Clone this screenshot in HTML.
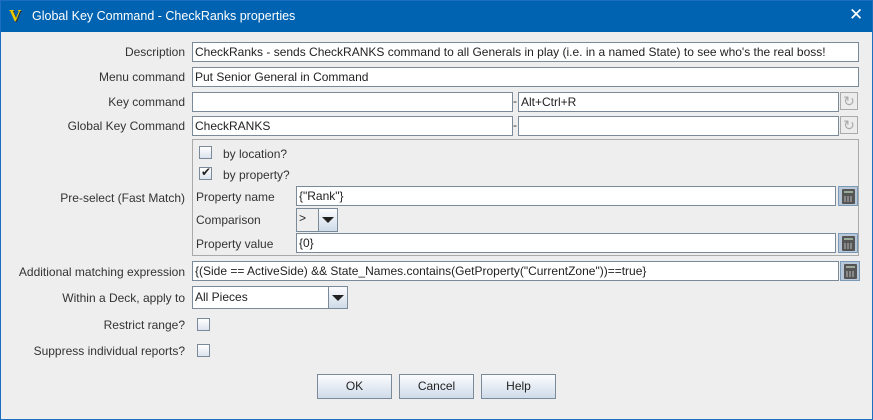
<!DOCTYPE html><html><head><style>
*{box-sizing:border-box;margin:0;padding:0}
body{width:873px;height:420px;background:#eeeeee;font:12px "Liberation Sans",sans-serif;color:#333;position:relative;overflow:hidden}
.a{position:absolute}
.win{left:0;top:0;width:873px;height:420px;border:1px solid #1c6fbf}
.title{left:0;top:0;width:873px;height:32px;background:#0063b1;color:#fff;font-size:12.5px}
.lab{position:absolute;text-align:right;width:185px;left:0;white-space:nowrap}
.f{position:absolute;background:#fff;border:1px solid #7a8a99;height:20px;padding:1px 2px;white-space:nowrap;overflow:hidden;color:#222;line-height:16px}
.cb{position:absolute;width:13px;height:13px;border:1px solid #7a8a99;background:linear-gradient(#fff,#dbe3ee)}
.btn{position:absolute;height:25px;border:1px solid #7a8a99;background:linear-gradient(#fbfcfe,#cfdbe9);text-align:center;line-height:23px;color:#222}
.calc{position:absolute;width:20px;height:20px;border:1px solid #7a9ab8;background:#b8c8d8}
.calc i{position:absolute;left:3px;top:2px;width:13px;height:15px;background:#555;border-radius:1px}
.calc b{position:absolute;left:5px;top:4px;width:9px;height:2px;background:#9a9}
.calc u{position:absolute;left:5px;top:9px;width:9px;height:6px;background:repeating-linear-gradient(90deg,#888 0 2px,#555 2px 3px)}
.rb{position:absolute;width:18px;height:18px;border:1px solid #aaa;background:#ececec;color:#aaa;font-size:14px;text-align:center;line-height:16px}
.arr{position:absolute;background:linear-gradient(#fbfcfe,#cfdbe9);border:1px solid #7a8a99}
.arr:after{content:"";position:absolute;left:50%;top:50%;margin:-3px 0 0 -6px;border-left:6px solid transparent;border-right:6px solid transparent;border-top:6px solid #222}
</style></head><body>
<div class="a title"><span class="a" style="left:9px;top:6px;font:bold 17px 'Liberation Serif',serif;color:#e8c800;text-shadow:1px 1px 0 #333">V</span><span class="a" style="left:32px;top:9px">Global Key Command - CheckRanks properties</span><span class="a" style="left:849px;top:5px;font-size:17px">✕</span></div>
<div class="a win"></div>
<div class="lab" style="top:45px">Description</div>
<div class="f" style="left:192px;top:42px;width:667px">CheckRanks - sends CheckRANKS command to all Generals in play (i.e. in a named State) to see who's the real boss!</div>
<div class="lab" style="top:70px">Menu command</div>
<div class="f" style="left:192px;top:67px;width:667px">Put Senior General in Command</div>
<div class="lab" style="top:95px">Key command</div>
<div class="f" style="left:192px;top:92px;width:321px"></div><span class="a" style="left:513px;top:94px">-</span>
<div class="f" style="left:518px;top:92px;width:321px">Alt+Ctrl+R</div><div class="rb" style="left:840px;top:92px">↻</div>
<div class="lab" style="top:119px">Global Key Command</div>
<div class="f" style="left:192px;top:116px;width:321px">CheckRANKS</div><span class="a" style="left:513px;top:118px">-</span>
<div class="f" style="left:518px;top:116px;width:321px"></div><div class="rb" style="left:840px;top:116px">↻</div>
<div class="a" style="left:192px;top:139px;width:667px;height:117px;border:1px solid #aaa"></div>
<div class="cb" style="left:199px;top:146px"></div><span class="a" style="left:223px;top:147px">by location?</span>
<div class="cb" style="left:199px;top:167px"><span class="a" style="left:1px;top:-3px;font-size:12px;color:#222">✔</span></div><span class="a" style="left:223px;top:168px">by property?</span>
<div class="lab" style="top:191px">Pre-select (Fast Match)</div>
<span class="a" style="left:196px;top:190px">Property name</span>
<div class="f" style="left:296px;top:186px;width:540px">{"Rank"}</div><div class="calc" style="left:838px;top:186px"><i></i><b></b><u></u></div>
<span class="a" style="left:196px;top:213px">Comparison</span>
<div class="f" style="left:296px;top:208px;width:23px;height:24px;background:#eee">&gt;</div><div class="arr" style="left:318px;top:208px;width:20px;height:24px"></div>
<span class="a" style="left:196px;top:237px">Property value</span>
<div class="f" style="left:296px;top:233px;width:540px">{0}</div><div class="calc" style="left:838px;top:233px"><i></i><b></b><u></u></div>
<div class="lab" style="top:265px">Additional matching expression</div>
<div class="f" style="left:192px;top:261px;width:647px">{(Side == ActiveSide) &amp;&amp; State_Names.contains(GetProperty("CurrentZone"))==true}</div><div class="calc" style="left:840px;top:261px"><i></i><b></b><u></u></div>
<div class="lab" style="top:291px">Within a Deck, apply to</div>
<div class="f" style="left:192px;top:286px;width:137px;height:23px;line-height:18px">All Pieces</div><div class="arr" style="left:328px;top:286px;width:20px;height:23px"></div>
<div class="lab" style="top:318px">Restrict range?</div><div class="cb" style="left:197px;top:318px"></div>
<div class="lab" style="top:344px">Suppress individual reports?</div><div class="cb" style="left:197px;top:344px"></div>
<div class="btn" style="left:317px;top:374px;width:75px">OK</div>
<div class="btn" style="left:399px;top:374px;width:75px">Cancel</div>
<div class="btn" style="left:481px;top:374px;width:75px">Help</div>
</body></html>
